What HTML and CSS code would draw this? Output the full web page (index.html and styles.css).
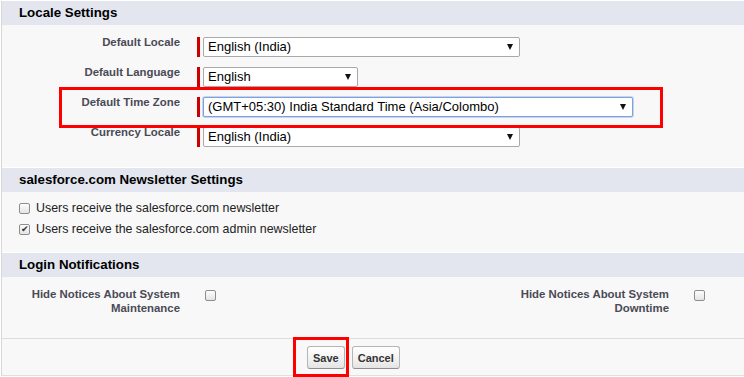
FILE: index.html
```html
<!DOCTYPE html>
<html lang="en">
<head>
    <meta charset="UTF-8">
    <title>Company Settings</title>
    <link rel="stylesheet" href="styles.css">
</head>
<body>

    <div class="panel">

        <!-- Locale -->
        <h3 class="section-head first">Locale Settings</h3>
        <div class="section-body locale">
            <div class="field-row">
                <div class="label">Default Locale</div>
                <div class="data"><span class="req"></span><div class="select w-wide">English (India)</div></div>
            </div>
            <div class="field-row">
                <div class="label">Default Language</div>
                <div class="data"><span class="req"></span><div class="select w-short">English</div></div>
            </div>
            <div class="field-row">
                <div class="label">Default Time Zone</div>
                <div class="data"><span class="req"></span><div class="select w-long focused">(GMT+05:30) India Standard Time (Asia/Colombo)</div></div>
            </div>
            <div class="field-row">
                <div class="label">Currency Locale</div>
                <div class="data"><span class="req"></span><div class="select w-wide">English (India)</div></div>
            </div>
        </div>

        <!-- Newsletter -->
        <h3 class="section-head">salesforce.com Newsletter Settings</h3>
        <div class="section-body newsletter">
            <label class="check-row"><span class="box"></span>Users receive the salesforce.com newsletter</label>
            <label class="check-row"><span class="box checked">&#10004;</span>Users receive the salesforce.com admin newsletter</label>
        </div>

        <!-- Login -->
        <h3 class="section-head">Login Notifications</h3>
        <div class="section-body login">
            <div class="label">Hide Notices About System Maintenance</div>
            <div class="data"><span class="box"></span></div>
            <div class="label">Hide Notices About System Downtime</div>
            <div class="data"><span class="box"></span></div>
        </div>

        <div class="buttons">
            <button class="btn">Save</button>
            <button class="btn">Cancel</button>
        </div>
    </div>

    <!-- annotation boxes -->
    <div class="mark mark-zone"></div>
    <div class="mark mark-save"></div>

</body>
</html>
```

FILE: styles.css
```css
body {
    margin: 0;
    background: #fff;
    font-family: "Liberation Sans", Arial, sans-serif;
    position: relative;
    width: 744px;
    height: 377px;
    overflow: hidden;
}

.panel {
    margin: 1px 0 0 1px;
    border-left: 1px solid #d8d8d8;
    border-bottom: 1px solid #e0e0e0;
    background: #f8f8f8;
}

/* Section headers */
.section-head {
    margin: 0;
    height: 24px;
    line-height: 24px;
    padding-left: 17px;
    background: #e3e6ee;
    border-top: 1px solid #fff;
    font-size: 13.3px;
    font-weight: bold;
    color: #000;
}

.section-head.first {
    border-top: none;
}

.label {
    font-size: 11.4px;
    font-weight: bold;
    color: #4a4a56;
    line-height: 14px;
    text-align: right;
    padding-right: 12px;
}

/* Locale rows */
.locale {
    padding: 12px 0 20px;
    display: flex;
    flex-direction: column;
    gap: 10px;
}

.field-row {
    display: grid;
    grid-template-columns: 190px 1fr;
    height: 20px;
}

.field-row .label {
    margin-top: -2px;
}

.field-row .data {
    display: flex;
    padding-left: 5px;
}

.req {
    width: 3px;
    height: 20px;
    background: #c00;
    margin-right: 3px;
}

.select {
    position: relative;
    height: 18px;
    line-height: 18px;
    border: 1px solid #a9a9a9;
    border-radius: 2px;
    background: #fff;
    padding-left: 4px;
    font-size: 13px;
    color: #000;
    box-sizing: content-box;
}

.select::after {
    content: "";
    position: absolute;
    right: 6px;
    top: 6px;
    border-left: 3.5px solid transparent;
    border-right: 3.5px solid transparent;
    border-top: 6px solid #111;
}

.w-wide { width: 311px; }
.w-short { width: 149px; }
.w-long { width: 424px; }

.select.focused {
    border-color: #7da2dc;
    box-shadow: 0 0 0 1px #c3d5f2;
}

/* Checkboxes */
.box {
    display: inline-block;
    width: 9px;
    height: 9px;
    border: 1px solid #8e8e8e;
    border-radius: 2px;
    background: linear-gradient(#fdfdfd, #e4e4e4);
    font-size: 9px;
    line-height: 9px;
    text-align: center;
    color: #333;
    vertical-align: top;
}

.newsletter {
    padding: 7px 0 14px 17px;
    display: flex;
    flex-direction: column;
    gap: 3px;
}

.check-row {
    display: flex;
    align-items: center;
    gap: 6px;
    height: 18px;
    font-size: 12.4px;
    color: #222;
}

/* Login notifications */
.login {
    display: grid;
    grid-template-columns: 190px 299px 190px 1fr;
    padding: 10px 0 23px;
}

.login .data {
    padding: 3px 0 0 13px;
}

/* Buttons */
.buttons {
    border-top: 1px solid #ddd;
    padding: 7px 0 6px 305px;
    display: flex;
    gap: 7px;
}

.btn {
    height: 23px;
    padding: 0 5px;
    font-family: "Liberation Sans", Arial, sans-serif;
    font-size: 11px;
    font-weight: bold;
    color: #333;
    background: linear-gradient(#ffffff, #f1f1f1 60%, #e4e4e4);
    border: 1px solid #b5b5b5;
    border-bottom-color: #8f8f8f;
    border-radius: 3px;
}

/* Red annotation rectangles */
.mark {
    position: absolute;
    border: 3px solid #f00;
    box-sizing: border-box;
}

.mark-zone {
    left: 59px;
    top: 87px;
    width: 604px;
    height: 41px;
}

.mark-save {
    left: 293px;
    top: 337px;
    width: 56px;
    height: 40px;
}
```
